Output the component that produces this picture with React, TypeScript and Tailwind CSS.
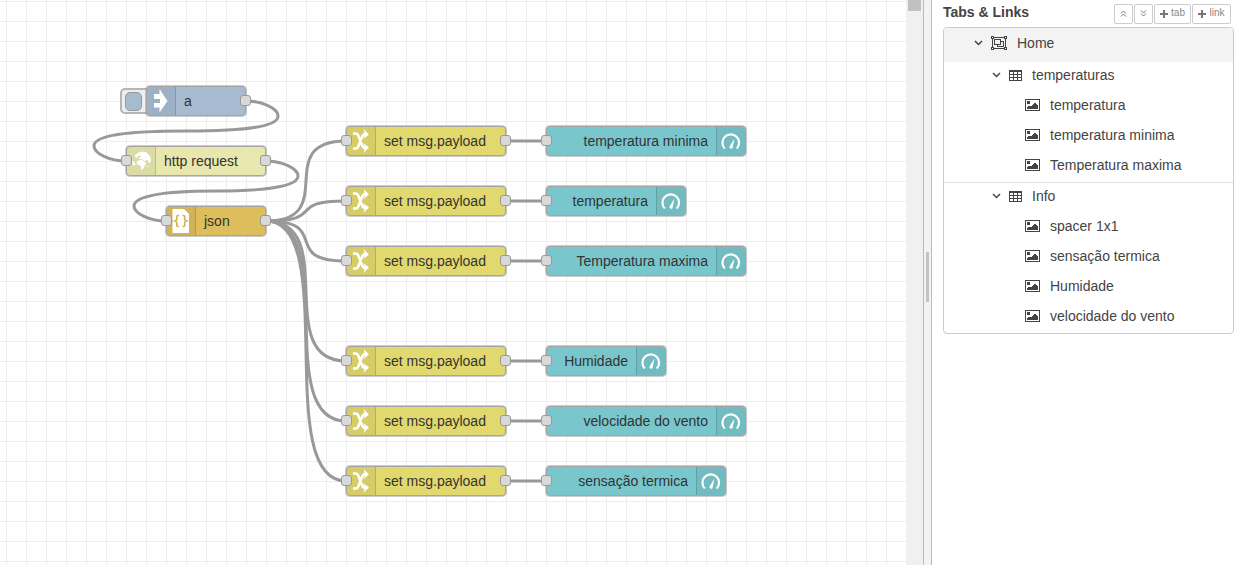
import React from "react";

type Icon = "inject" | "globe" | "json" | "change" | "gauge";

interface FlowNode {
  id: string;
  x: number;
  y: number;
  w: number;
  label: string;
  icon: Icon;
  color: string;
  input?: boolean;
  output?: boolean;
}

const YELLOW = "bg-[#e2d96e]";
const TEAL = "bg-[#79c6cc]";

const change = (id: string, y: number): FlowNode => ({
  id, x: 346, y, w: 160, label: "set msg.payload", icon: "change", color: YELLOW, input: true, output: true,
});
const gauge = (id: string, y: number, w: number, label: string): FlowNode => ({
  id, x: 546, y, w, label, icon: "gauge", color: TEAL, input: true,
});

const nodes: FlowNode[] = [
  { id: "a", x: 146, y: 101, w: 100, label: "a", icon: "inject", color: "bg-[#a6bbcf]", output: true },
  { id: "http", x: 126, y: 161, w: 140, label: "http request", icon: "globe", color: "bg-[#e7e7ae]", input: true, output: true },
  { id: "json", x: 166, y: 221, w: 100, label: "json", icon: "json", color: "bg-[#debd5c]", input: true, output: true },
  change("c1", 141),
  change("c2", 201),
  change("c3", 261),
  change("c4", 361),
  change("c5", 421),
  change("c6", 481),
  gauge("g1", 141, 200, "temperatura minima"),
  gauge("g2", 201, 140, "temperatura"),
  gauge("g3", 261, 200, "Temperatura maxima"),
  gauge("g4", 361, 120, "Humidade"),
  gauge("g5", 421, 200, "velocidade do vento"),
  gauge("g6", 481, 180, "sensação termica"),
];

const links: [string, string][] = [
  ["a", "http"], ["http", "json"],
  ["json", "c1"], ["json", "c2"], ["json", "c3"], ["json", "c4"], ["json", "c5"], ["json", "c6"],
  ["c1", "g1"], ["c2", "g2"], ["c3", "g3"], ["c4", "g4"], ["c5", "g5"], ["c6", "g6"],
];

function linkPath(fromId: string, toId: string): string {
  const from = nodes.find((n) => n.id === fromId)!;
  const to = nodes.find((n) => n.id === toId)!;
  const x1 = from.x + from.w;
  const y1 = from.y;
  const x2 = to.x;
  const y2 = to.y;
  const dx = x2 - x1;
  const dy = y2 - y1;
  if (dx > 0) {
    const reach = 75 * Math.min(1, Math.hypot(dx, dy) / 100);
    return `M ${x1} ${y1} C ${x1 + reach} ${y1} ${x2 - reach} ${y2} ${x2} ${y2}`;
  }
  // Backwards link: loops out to the right, crosses over, and comes in from the left.
  const reach = 40 - 0.2 * Math.max(0, 100 - Math.min(Math.abs(dx), Math.abs(dy)));
  const h = 15;
  const midX = x2 - dx / 2;
  const midY = y2 - dy / 2;
  const q = (y2 + midY) / 2;
  const topX = x1 + reach;
  const topY = Math.min(q - dy / 2, y1 + h);
  const botX = x2 - reach;
  const botY = Math.max(q, y2 - h);
  const cx = (x1 + topX) / 2;
  return [
    `M ${x1} ${y1} C ${cx} ${y1} ${topX} ${topY - h / 2} ${topX} ${topY}`,
    `S ${cx} ${Math.min(midY, topY + h)} ${midX} ${midY}`,
    `S ${botX} ${botY - h / 2} ${botX} ${botY}`,
    `S ${(x2 + botX) / 2} ${y2} ${x2} ${y2}`,
  ].join(" ");
}

function NodeIcon({ icon }: { icon: Icon }) {
  return (
    <svg viewBox="0 0 30 30" className="size-[30px] shrink-0 fill-white" aria-hidden="true">
      {icon === "inject" && <path d="M13.500 3 21.500 15 13.500 26.500V21.500H8V17H14V13H8V8H13.500Z" />}
      {icon === "globe" && (
        <g>
          <path d="M8.500 10 11.500 7 16 5.500 20.500 6.500 23.500 9.500 25 13.500 24 17.500 22.500 16 21.500 14 20 14 18.500 15.500 16.500 13 14 13.500 12.500 12 15.500 10.500 13 9.500 10.500 12Z" />
          <path d="M12 14.500 16 14 18.500 16 20.500 17 18.500 20 17 23.500 15 23 14.500 19.500 11 18.500 10.500 16Z" />
          <path d="M6 14.500 8.500 16 9.500 18 8.500 20 6.500 18.500ZM20.500 21 23 18.500 21.500 21.500Z" />
        </g>
      )}
      {icon === "json" && (
        <g>
          <path d="M6.500 3H18L23 8V27H6.500Z" />
          <path d="M13 9.500H12Q10.800 9.500 10.800 11V13.300Q10.800 14.500 9 15Q10.800 15.500 10.800 16.700V19Q10.800 20.500 12 20.500H13M16.500 9.500H17.500Q18.700 9.500 18.700 11V13.300Q18.700 14.500 20.500 15Q18.700 15.500 18.700 16.700V19Q18.700 20.500 17.500 20.500H16.500" className="fill-none stroke-[#d3b357] stroke-[1.700]" />
        </g>
      )}
      {icon === "change" && (
        <g>
          <path d="M7 7.500H9.500Q12 7.500 13 11.500L16 19Q17 22 19.500 22H20.500M7 22.500H9.500Q12 22.500 13 18.500L16 11Q17 8 19.500 8H20.500" className="fill-none stroke-white stroke-[2.500]" />
          <path d="M17.500 3 23 8.500 17.500 13 19 8.500ZM17.500 17 23 21.500 17.500 27 19 21.500Z" />
        </g>
      )}
      {icon === "gauge" && (
        <g>
          <path d="M8.800 22.500A8.300 8.300 0 1 1 20.700 22.500" className="fill-none stroke-white stroke-[2.200]" />
          <path d="M18.500 12.500 16.500 22A1.700 1.700 0 0 1 13.500 20.500Z" />
        </g>
      )}
    </svg>
  );
}

function Port({ side }: { side: "left" | "right" }) {
  return (
    <span
      className={`absolute top-[9px] size-[11px] rounded-[3px] border border-[#999] bg-[#d9d9d9] ${
        side === "left" ? "left-[-5px]" : "right-[-5px]"
      }`}
    />
  );
}

function NodeBox({ node }: { node: FlowNode }) {
  const right = node.icon === "gauge";
  return (
    <div className="absolute" style={{ left: node.x, top: node.y - 15, width: node.w }}>
      {node.icon === "inject" && (
        <button
          type="button"
          aria-label="Inject"
          className="absolute top-[2px] left-[-26px] flex h-[26px] w-8 items-center rounded-[5px] border-2 border-[#b5b5b5] bg-[#eee] pl-[3px]"
        >
          <span className="h-[19px] w-[17px] rounded-[5px] border border-[#999] bg-[#a6bbcf]" />
        </button>
      )}
      <div
        className={`relative flex h-[30px] overflow-hidden rounded-[4px] border border-[#a5a5a5] ring-1 ring-[#999]/50 ${node.color} ${
          right ? "flex-row-reverse" : ""
        }`}
      >
        <span
          className={`flex h-full w-[29px] shrink-0 items-center justify-center bg-black/5 ${
            right ? "border-l border-black/15" : "border-r border-black/15"
          }`}
        >
          <NodeIcon icon={node.icon} />
        </span>
        <span className="px-2 text-sm leading-7 whitespace-nowrap text-[#333]">{node.label}</span>
      </div>
      {node.input && <Port side="left" />}
      {node.output && <Port side="right" />}
    </div>
  );
}

function Workspace() {
  return (
    <main className="relative min-w-0 flex-1 overflow-hidden bg-white">
      <svg className="absolute inset-0 size-full" aria-hidden="true">
        <defs>
          <pattern id="grid" width="20" height="20" patternUnits="userSpaceOnUse">
            <path d="M6.500 0V20M0 1.500H20" className="fill-none stroke-[#eee]" />
          </pattern>
        </defs>
        <rect width="100%" height="100%" fill="url(#grid)" />
        <g className="fill-none stroke-[#999] stroke-[3]">
          {links.map(([a, b]) => (
            <path key={a + b} d={linkPath(a, b)} />
          ))}
        </g>
      </svg>
      {nodes.map((n) => (
        <NodeBox key={n.id} node={n} />
      ))}
    </main>
  );
}

function Chevron() {
  return (
    <button type="button" aria-label="Toggle" className="flex h-4 w-[9px] shrink-0 items-center justify-center">
      <svg viewBox="0 0 9 6" className="h-[6px] w-[9px] fill-none stroke-[#444] stroke-[1.500]">
        <path d="M1 1 4.500 4.500 8 1" />
      </svg>
    </button>
  );
}

function GroupIcon() {
  return (
    <svg viewBox="0 0 16 14" shapeRendering="crispEdges" className="h-[14px] w-4 shrink-0 fill-none stroke-[#444]" aria-hidden="true">
      <path d="M1.500 1.500H14.500V12.500H1.500Z" />
      <path d="M.5 .5H2.500V2.500H.5ZM13.500 .5H15.500V2.500H13.500ZM.5 11.500H2.500V13.500H.5ZM13.500 11.500H15.500V13.500H13.500Z" className="fill-white" />
      <path d="M3.500 3.500H9.500V8.500H3.500ZM9.500 5.500H12.500V10.500H6.500V8.500" />
    </svg>
  );
}

function TableIcon() {
  return (
    <svg viewBox="0 0 13 11" shapeRendering="crispEdges" className="h-[11px] w-[13px] shrink-0 fill-none stroke-[#444]" aria-hidden="true">
      <path d="M.5 .5H12.500V10.500H.5ZM0 1.500H13M0 4.500H13M0 7.500H13M4.500 1V11M8.500 1V11" />
    </svg>
  );
}

function ImageIcon() {
  return (
    <svg viewBox="0 0 15 12" shapeRendering="crispEdges" className="h-3 w-[15px] shrink-0" aria-hidden="true">
      <path d="M.5 .5H14.500V11.500H.5Z" className="fill-none stroke-[#444]" />
      <path d="M2 2H5V5H2ZM2 10V8.500L4.500 6.500 6 7.500 9.500 3.500 13 7V10Z" className="fill-[#444]" />
    </svg>
  );
}

const groups = [
  { name: "temperaturas", items: ["temperatura", "temperatura minima", "Temperatura maxima"] },
  { name: "Info", items: ["spacer 1x1", "sensação termica", "Humidade", "velocidade do vento"] },
];

const toolButton =
  "flex h-5 items-center justify-center gap-[3px] rounded-[2px] border border-[#ccc] bg-white text-[10px] text-[#888]";

function DoubleChevron({ down = false }: { down?: boolean }) {
  return (
    <svg viewBox="0 0 7 7" className={`size-[7px] fill-none stroke-[#777] ${down ? "rotate-180" : ""}`} aria-hidden="true">
      <path d="M1 3.500 3.500 1 6 3.500M1 6.500 3.500 4 6 6.500" />
    </svg>
  );
}

function Plus() {
  return (
    <svg viewBox="0 0 8 8" className="size-2 fill-[#777]" aria-hidden="true">
      <path d="M3 0H5V3H8V5H5V8H3V5H0V3H3Z" />
    </svg>
  );
}

function Sidebar() {
  return (
    <aside className="w-[313px] shrink-0 border-l border-[#bbb] bg-white pr-[10px] pl-[11px] text-sm text-[#444]">
      <header className="flex h-[27px] items-center justify-between pr-[3px]">
        <h2 className="pb-[3px] font-bold">Tabs &amp; Links</h2>
        <div className="flex gap-px">
          <button type="button" aria-label="Collapse all" className={`${toolButton} w-[19px]`}><DoubleChevron /></button>
          <button type="button" aria-label="Expand all" className={`${toolButton} w-[19px]`}><DoubleChevron down /></button>
          <button type="button" className={`${toolButton} w-[37px]`}><Plus />tab</button>
          <button type="button" className={`${toolButton} w-[39px]`}><Plus />link</button>
        </div>
      </header>
      <div className="overflow-hidden rounded-[4px] border border-[#ccc]">
        <div className="flex h-[34px] items-center bg-[#f3f3f3] pb-1 pl-[30px]">
          <Chevron />
          <span className="ml-2 flex items-center gap-[10px]"><GroupIcon />Home</span>
        </div>
        {groups.map((g) => (
          <section key={g.name} className="border-b border-[#ddd] pb-[2px] last:border-b-0">
            <div className="flex h-7 items-center pb-[2px] pl-12">
              <Chevron />
              <span className="ml-2 flex items-center gap-[10px]"><TableIcon />{g.name}</span>
            </div>
            <ul>
              {g.items.map((item) => (
                <li key={item} className="flex h-[30px] items-center gap-[10px] pl-[81px]"><ImageIcon />{item}</li>
              ))}
            </ul>
          </section>
        ))}
      </div>
    </aside>
  );
}

export default function App() {
  return (
    <div className="flex h-screen overflow-hidden font-['Liberation_Sans',Arial,sans-serif]">
      <Workspace />
      <div className="w-[17px] shrink-0 bg-[#f0f0f0] px-[2px]">
        <div className="h-[11px] bg-[#c1c1c1]" />
      </div>
      <div className="flex w-2 shrink-0 items-center justify-center border-l border-[#bbb] bg-[#f3f3f3]">
        <div className="mb-[11px] h-[50px] w-[3px] bg-[#c4c4c4]" />
      </div>
      <Sidebar />
    </div>
  );
}
